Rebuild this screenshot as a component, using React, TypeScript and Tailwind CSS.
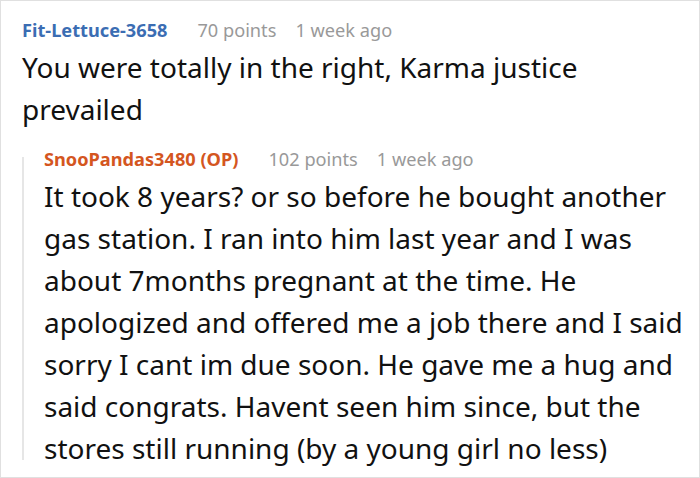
export default function App() {
    return (
        <div className="w-[700px] h-[478px] bg-white border border-[#e0e0e0] pl-[21px] pt-[16px] pr-[16px] font-['Noto_Sans',sans-serif] text-[#111]">
            <div className="flex items-baseline text-[18.2px] leading-[26px]">
                <span className="font-bold text-[#3b6db3]">Fit-Lettuce-3658</span>
                <span className="ml-[30px] text-[#999]">70 points</span>
                <span className="ml-[19px] text-[#999]">1 week ago</span>
            </div>
            <p className="mt-[3px] text-[28px] leading-[42px]">
                You were totally in the right, Karma justice prevailed
            </p>
            <div className="mt-[16px] flex">
                <div className="mt-[11px] mb-[9px] w-[2px] shrink-0 bg-[#e6e6e6]" />
                <div className="pl-[20px]">
                    <div className="flex items-baseline text-[18.2px] leading-[26px]">
                        <span className="font-bold text-[#d4561f]">SnooPandas3480 (OP)</span>
                        <span className="ml-[30px] text-[#999]">102 points</span>
                        <span className="ml-[19px] text-[#999]">1 week ago</span>
                    </div>
                    <p className="mt-[3px] text-[28px] leading-[42px]">
                        It took 8 years? or so before he bought another gas station. I ran into him last year and I was about 7months pregnant at the time. He apologized and offered me a job there and I said sorry I cant im due soon. He gave me a hug and said congrats. Havent seen him since, but the stores still running (by a young girl no less)
                    </p>
                </div>
            </div>
        </div>
    );
}
